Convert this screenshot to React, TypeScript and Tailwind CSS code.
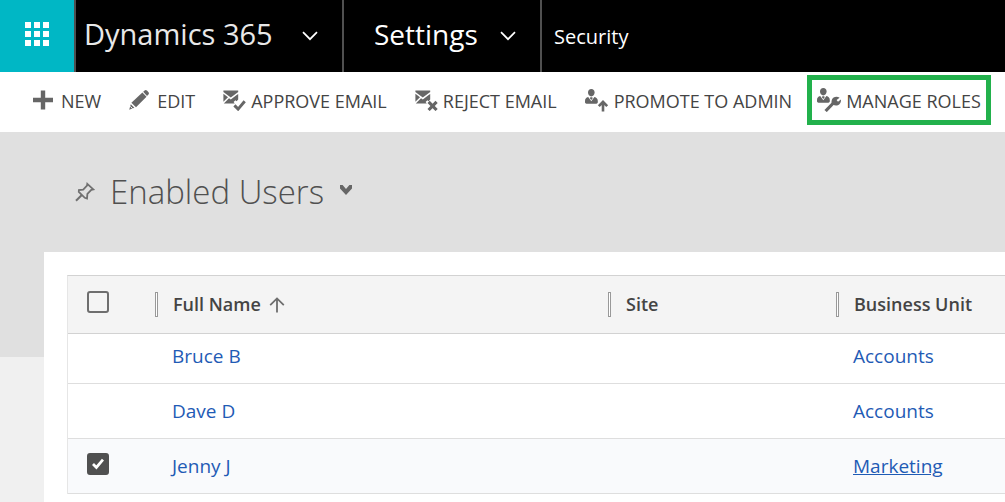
import type { ReactNode } from "react";

type IconProps = { className?: string };

function WaffleIcon() {
  return (
    <svg width="24" height="24" viewBox="0 0 24 24" fill="#fff" aria-hidden="true">
      {[0, 9, 18].map((y) => [0, 9, 18].map((x) => <rect key={`${x}-${y}`} x={x} y={y} width="6" height="6" />))}
    </svg>
  );
}

function ChevronIcon({ className }: IconProps) {
  return (
    <svg className={className} width="16" height="10" viewBox="0 0 16 10" fill="none" stroke="#fff" strokeWidth="1.7" aria-hidden="true">
      <path d="M1 1.2 8 8.2 15 1.2" />
    </svg>
  );
}

function PlusIcon() {
  return (
    <svg width="20" height="22" viewBox="0 0 20 22" fill="#666" aria-hidden="true">
      <path d="M7.800 1.500h4.400v7.300H20v4.400h-7.800v7.300H7.800v-7.300H0V8.800h7.800z" />
    </svg>
  );
}

function PencilIcon() {
  return (
    <svg width="20" height="22" viewBox="0 0 20 22" fill="#666" aria-hidden="true">
      <path d="M14.2 2.800 15.600 1.400q1.300-.9 2.600.4l1.300 1.400q.9 1.200-.1 2.400L18 7z" />
      <path d="M13.400 3.400 17.500 7.700 7 18.300 2.400 13.700z" />
      <path d="M1.800 15.200 5.400 18.800.2 20.800z" />
      <path d="m1.300 17.400 2.200 2.200" stroke="#fff" strokeWidth="1" />
    </svg>
  );
}

function Envelope() {
  return (
    <>
      <path d="M.4 1.500h14.800v1.500L7.800 8.400.4 3z" />
      <path d="M.4 4.800 5 8.300.4 12.800zM6 9.200l1.800 1.200 5.200-3.800 2.200-1.600v5.600l-1.600 1.600-1.200-1-1.800 1.800 1.200 1.400H.8z" />
    </>
  );
}

function ApproveIcon() {
  return (
    <svg width="23" height="22" viewBox="0 0 23 22" fill="#666" aria-hidden="true">
      <Envelope />
      <path d="m11.400 16.400 3.700 3.700 6.600-7.900" fill="none" stroke="#666" strokeWidth="2.900" />
    </svg>
  );
}

function RejectIcon() {
  return (
    <svg width="23" height="22" viewBox="0 0 23 22" fill="#666" aria-hidden="true">
      <Envelope />
      <path d="m13.600 12.800 8 8.200M21.600 12.800l-8 8.200" fill="none" stroke="#666" strokeWidth="3.100" />
    </svg>
  );
}

function Person() {
  return (
    <>
      <path d="M6.300.1c2 0 3.300 1.400 3.300 3.500S8.100 7.400 6.300 7.400 3 5.700 3 3.600 4.300.1 6.300.1z" />
      <path d="M3.200 8 6.300 12.200 9.400 8c2.200.6 3.400 1.800 3.400 4v1.600q-.3.900-1.400 1.200H1.400Q.2 14.500 0 13.600V12c0-2.200 1-3.400 3.200-4z" />
      <path d="M5.300 8.200h2l.4 1-1.400 1.900-1.400-1.900z" />
    </>
  );
}

function PromoteIcon() {
  return (
    <svg width="24" height="23" viewBox="0 0 24 23" fill="#666" aria-hidden="true">
      <Person />
      <path d="M18 22.500v-9M13.800 17.200 18 12.800l4.200 4.400" fill="none" stroke="#666" strokeWidth="2.600" />
    </svg>
  );
}

function RolesIcon() {
  return (
    <svg width="24" height="24" viewBox="0 0 24 24" fill="#666" aria-hidden="true">
      <Person />
      <path d="m8.800 22.800 7.600-8" fill="none" stroke="#fff" strokeWidth="5" />
      <path d="m8.600 23 7.800-8" fill="none" stroke="#666" strokeWidth="3.200" />
      <path d="M16.600 9.400c2-1 4.300-.9 6 .3l-3 2.300 1.400 1.800 2.900-2.200c.4 2.600-.8 4.700-3 5.600-1.700.5-3.400.4-4.800-.5-1.400-1-1.800-2.300-1.500-3.700.2-1.600.8-2.800 2-3.600z" />
    </svg>
  );
}

function PinIcon() {
  return (
    <svg width="20" height="20" viewBox="0 0 20 20" fill="none" stroke="#707070" strokeWidth="1.800" aria-hidden="true">
      <path d="M12.300 1.800 18.300 7.400 16.300 7.800 12.400 12 12 16.600 9.800 15.800 3.800 9.900 3.900 8.100 8.200 7.600 12 3.700z" />
      <path d="M6.800 13 1 18.800" strokeWidth="2" />
    </svg>
  );
}

function SortArrow() {
  return (
    <svg width="16" height="16" viewBox="0 0 16 16" fill="none" stroke="#6e6e6e" strokeWidth="1.800" aria-hidden="true">
      <path d="M8 15.500V1.500M1.200 8.200 8 1.400l6.800 6.800" />
    </svg>
  );
}

function Checkbox({ label, checked }: { label: string; checked?: boolean }) {
  return (
    <label className="ml-[19px] grid size-[22px] cursor-pointer place-items-center">
      <input
        type="checkbox"
        aria-label={label}
        defaultChecked={checked}
        className="peer col-start-1 row-start-1 size-[22px] appearance-none rounded-[3px] border-2 border-[#6e6e6e] bg-transparent checked:border-[#505050] checked:bg-[#505050]"
      />
      <svg className="pointer-events-none col-start-1 row-start-1 opacity-0 peer-checked:opacity-100" width="12" height="12" viewBox="0 0 12 12" fill="none" stroke="#fff" strokeWidth="2.800" aria-hidden="true">
        <path d="m1 6 3.400 3.400L11 1.600" />
      </svg>
    </label>
  );
}

const commands: { label: string; icon: ReactNode; className: string }[] = [
  { label: "NEW", icon: <PlusIcon />, className: "gap-2" },
  { label: "EDIT", icon: <PencilIcon />, className: "gap-2" },
  { label: "APPROVE EMAIL", icon: <ApproveIcon />, className: "gap-[5px]" },
  { label: "REJECT EMAIL", icon: <RejectIcon />, className: "gap-[5px]" },
  { label: "PROMOTE TO ADMIN", icon: <PromoteIcon />, className: "gap-[5px]" },
];

const users = [
  { name: "Bruce B", unit: "Accounts" },
  { name: "Dave D", unit: "Accounts" },
  { name: "Jenny J", unit: "Marketing", selected: true },
];

function HeaderCell({ children }: { children: ReactNode }) {
  return (
    <th scope="col" className="p-0 text-left font-semibold">
      <div className="flex items-center gap-[15px]">
        <span className="h-[25px] w-[3px] shrink-0 border border-[#999] bg-white" />
        <span className="flex items-center gap-2 whitespace-nowrap">{children}</span>
      </div>
    </th>
  );
}

export default function App() {
  return (
    <div className="flex min-h-screen flex-col bg-[#f0f0f0] font-['Open_Sans','Noto_Sans',sans-serif] text-[#444]">
      <header className="flex h-[72px] shrink-0 bg-black text-white">
        <button aria-label="All apps" className="flex w-[76px] items-center justify-center border-r-2 border-[#505050] bg-[#00b7c5] pb-1">
          <WaffleIcon />
        </button>
        <button className="flex w-[268px] items-center justify-between border-r-2 border-[#505050] pr-6 pl-2">
          <span className="pb-1 text-[29px] leading-10 text-[#e8e8e8]">Dynamics 365</span>
          <ChevronIcon />
        </button>
        <button className="flex w-[198px] items-center justify-between border-r-2 border-[#505050] pr-6 pl-[30px]">
          <span className="pb-1 text-[28px] leading-10">Settings</span>
          <ChevronIcon />
        </button>
        <a href="#security" className="flex items-center pt-0.5 pl-3 text-xl">Security</a>
      </header>

      <nav aria-label="Commands" className="flex h-[60px] shrink-0 items-center gap-7 bg-white pb-1 pl-[33px] text-[18px] whitespace-nowrap">
        {commands.map((command) => (
          <button key={command.label} className={`flex items-center ${command.className}`}>
            {command.icon}
            <span className="pt-0.5">{command.label}</span>
          </button>
        ))}
        <button className="-ml-[13px] flex h-[50px] items-center gap-[5px] border-[5px] border-[#22b14c] px-[5px]">
          <RolesIcon />
          <span className="pt-0.5">MANAGE ROLES</span>
        </button>
      </nav>

      <main className="flex flex-1 flex-col bg-[linear-gradient(#e0e0e0_225px,#f0f0f0_225px)]">
        <div className="flex h-[120px] shrink-0 items-center pl-[75px]">
          <button aria-label="Pin view"><PinIcon /></button>
          <button className="ml-[15px] flex items-center gap-4">
            <h1 className="text-[33px] leading-[48px] font-light text-[#505050]">Enabled Users</h1>
            <svg className="mb-1" width="12" height="10" viewBox="0 0 12 10" fill="#666" aria-hidden="true">
              <path d="M0 0h2.600L6 4 9.400 0H12v3.400L6 10 0 3.400z" />
            </svg>
          </button>
        </div>

        <section className="ml-11 flex-1 overflow-hidden bg-white pt-[23px] pl-[23px]">
          <table className="w-full table-fixed border-separate border-spacing-0 border-t border-l border-t-[#d2d2d2] border-l-[#e6e6e6] text-[18px]">
            <colgroup>
              <col className="w-[87px]" />
              <col />
              <col className="w-[228px]" />
              <col className="w-[169px]" />
            </colgroup>
            <thead>
              <tr className="h-[58px] bg-[#f4f4f4] [&>th]:border-b [&>th]:border-[#d2d2d2]">
                <th className="p-0 pb-1.5"><Checkbox label="Select all users" /></th>
                <HeaderCell>Full Name <SortArrow /></HeaderCell>
                <HeaderCell>Site</HeaderCell>
                <HeaderCell>Business Unit</HeaderCell>
              </tr>
            </thead>
            <tbody className="text-[19px]">
              {users.map((user) => (
                <tr
                  key={user.name}
                  className={`h-[55px] first:h-[50px] [&>td]:border-b [&>td]:border-[#dedede] [&>td]:p-0 first:[&>td]:pb-1 ${user.selected ? "bg-[#f9fafc]" : "bg-white"}`}
                >
                  <td>
                    {user.selected && (
                      <div className="pb-1">
                        <Checkbox label={`Select ${user.name}`} checked />
                      </div>
                    )}
                  </td>
                  <td><a href="#user" className="ml-[17px] text-[#1f5bb5]">{user.name}</a></td>
                  <td />
                  <td>
                    <a href="#unit" className={`ml-[17px] text-[#1f5bb5] ${user.selected ? "underline" : ""}`}>{user.unit}</a>
                  </td>
                </tr>
              ))}
            </tbody>
          </table>
        </section>
      </main>
    </div>
  );
}
